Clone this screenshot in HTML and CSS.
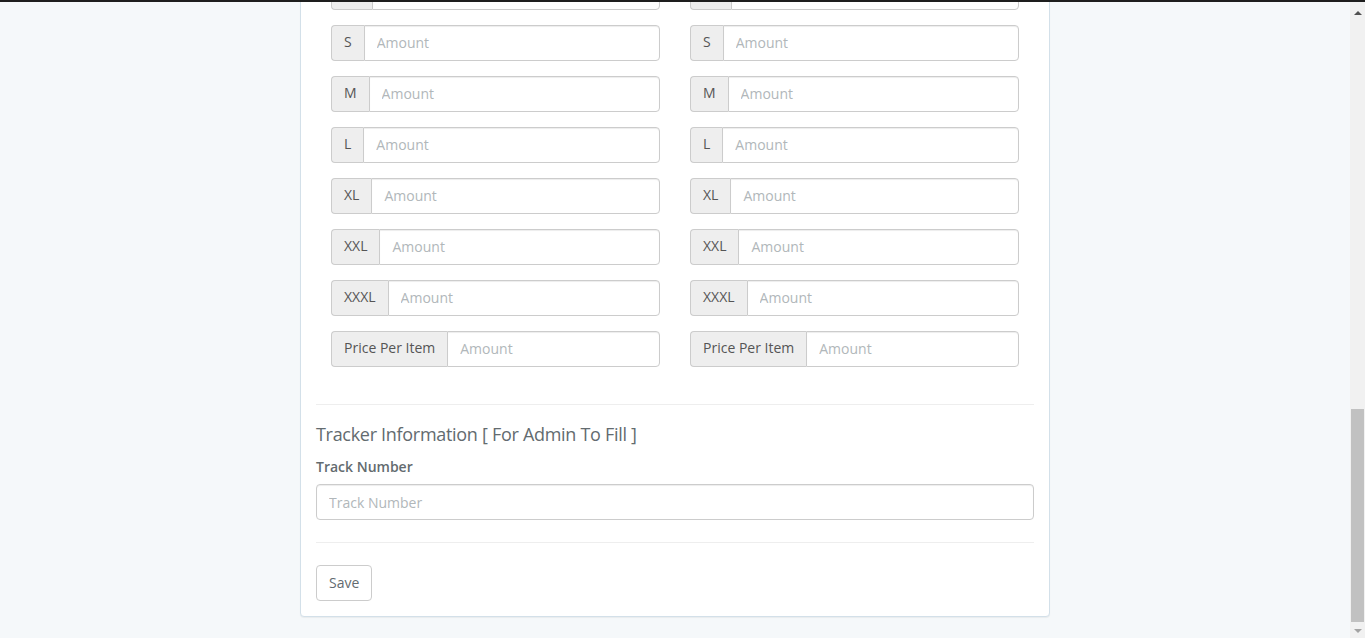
FILE: index.html
```html
<!DOCTYPE html>
<html lang="en">
<head>
<meta charset="utf-8">
<title>Order Form</title>
<link rel="stylesheet" href="styles.css">
</head>
<body>
<div class="topline"></div>
<div class="screen">
  <main class="main">
    <div class="panel">
      <div class="panel-body">
        <form class="order-form">
          <div class="size-grid">
            <div class="size-col">
              <div class="input-group"><span class="addon">XS</span><input class="form-control" type="text" placeholder="Amount"></div>
              <div class="input-group"><span class="addon">S</span><input class="form-control" type="text" placeholder="Amount"></div>
              <div class="input-group"><span class="addon">M</span><input class="form-control" type="text" placeholder="Amount"></div>
              <div class="input-group"><span class="addon">L</span><input class="form-control" type="text" placeholder="Amount"></div>
              <div class="input-group"><span class="addon">XL</span><input class="form-control" type="text" placeholder="Amount"></div>
              <div class="input-group"><span class="addon">XXL</span><input class="form-control" type="text" placeholder="Amount"></div>
              <div class="input-group"><span class="addon">XXXL</span><input class="form-control" type="text" placeholder="Amount"></div>
              <div class="input-group"><span class="addon">Price Per Item</span><input class="form-control" type="text" placeholder="Amount"></div>
            </div>
            <div class="size-col">
              <div class="input-group"><span class="addon">XS</span><input class="form-control" type="text" placeholder="Amount"></div>
              <div class="input-group"><span class="addon">S</span><input class="form-control" type="text" placeholder="Amount"></div>
              <div class="input-group"><span class="addon">M</span><input class="form-control" type="text" placeholder="Amount"></div>
              <div class="input-group"><span class="addon">L</span><input class="form-control" type="text" placeholder="Amount"></div>
              <div class="input-group"><span class="addon">XL</span><input class="form-control" type="text" placeholder="Amount"></div>
              <div class="input-group"><span class="addon">XXL</span><input class="form-control" type="text" placeholder="Amount"></div>
              <div class="input-group"><span class="addon">XXXL</span><input class="form-control" type="text" placeholder="Amount"></div>
              <div class="input-group"><span class="addon">Price Per Item</span><input class="form-control" type="text" placeholder="Amount"></div>
            </div>
          </div>
          <hr class="divider">
          <h4 class="section-title">Tracker Information [ For Admin To Fill ]</h4>
          <label class="field-label" for="track">Track Number</label>
          <input id="track" class="form-control full" type="text" placeholder="Track Number">
          <hr class="divider">
          <button class="btn" type="button">Save</button>
        </form>
      </div>
    </div>
  </main>
  <div class="scrollbar">
    <div class="sb-btn"><span class="arrow-up"></span></div>
    <div class="sb-track"><div class="sb-thumb"></div></div>
    <div class="sb-btn"><span class="arrow-down"></span></div>
  </div>
</div>
</body>
</html>
```
FILE: styles.css
```css
* { box-sizing: border-box; }
html, body { margin: 0; padding: 0; }
body {
  background: #f5f8fa;
  font-family: "Open Sans", "Liberation Sans", sans-serif;
  font-size: 14px;
  line-height: 1.6;
  color: #636b6f;
  height: 638px;
  overflow: hidden;
}
.topline { height: 2px; background: #1e1e1e; }
.screen { display: flex; height: 636px; }
.main { flex: 1; overflow: hidden; }

.panel {
  width: 750px;
  margin: -44px auto 0;
  background: #fff;
  border: 1px solid #d3e0e9;
  border-radius: 4px;
  box-shadow: 0 1px 1px rgba(0,0,0,0.05);
}
.panel-body { padding: 15px; }

.size-grid { display: grid; grid-template-columns: 1fr 1fr; }
.size-col { padding: 0 15px; }

.input-group { display: flex; height: 36px; margin-bottom: 15px; }
.addon {
  display: flex;
  align-items: center;
  padding: 5px 12px 7px;
  background: #eee;
  border: 1px solid #ccc;
  border-right: 0;
  border-radius: 4px 0 0 4px;
  color: #555;
  font-size: 14px;
  white-space: nowrap;
}
.form-control {
  flex: 1;
  min-width: 0;
  height: 36px;
  padding: 5px 12px 7px;
  font-family: inherit;
  font-size: 14px;
  line-height: 1.6;
  color: #555;
  background: #fff;
  border: 1px solid #ccc;
  border-radius: 0 4px 4px 0;
  box-shadow: inset 0 1px 1px rgba(0,0,0,0.075);
  outline: none;
}
.form-control::placeholder { color: #b1b7ba; }
.form-control.full { display: block; width: 100%; border-radius: 4px; padding: 6px 12px; }

.divider { border: 0; border-top: 1px solid #eee; margin: 22px 0 20px; }
.form-control.full + .divider { margin: 22px 0; }

.section-title {
  margin: 0 0 11px;
  font-size: 18px;
  font-weight: 400;
  line-height: 1.1;
  letter-spacing: -0.3px;
  color: #636b6f;
}
.field-label {
  display: block;
  margin-bottom: 6px;
  font-weight: 600;
  color: #636b6f;
}

.btn {
  display: inline-block;
  height: 36px;
  padding: 6px 12px;
  font-family: inherit;
  font-size: 14px;
  line-height: 1.6;
  color: #636b6f;
  background: #fff;
  border: 1px solid #ccc;
  border-radius: 4px;
}

.scrollbar {
  width: 15px;
  background: #f1f1f1;
  display: flex;
  flex-direction: column;
}
.sb-btn { height: 15px; display: flex; align-items: center; justify-content: center; }
.sb-track { flex: 1; padding-top: 392px; }
.sb-thumb { height: 213px; margin: 0 1px; background: #c1c1c1; }
.arrow-up {
  width: 0; height: 0;
  border-left: 4px solid transparent;
  border-right: 4px solid transparent;
  border-bottom: 4px solid #505050;
  margin-top: 6px;
}
.arrow-down {
  width: 0; height: 0;
  border-left: 4px solid transparent;
  border-right: 4px solid transparent;
  border-top: 4px solid #a3a3a3;
}
```
